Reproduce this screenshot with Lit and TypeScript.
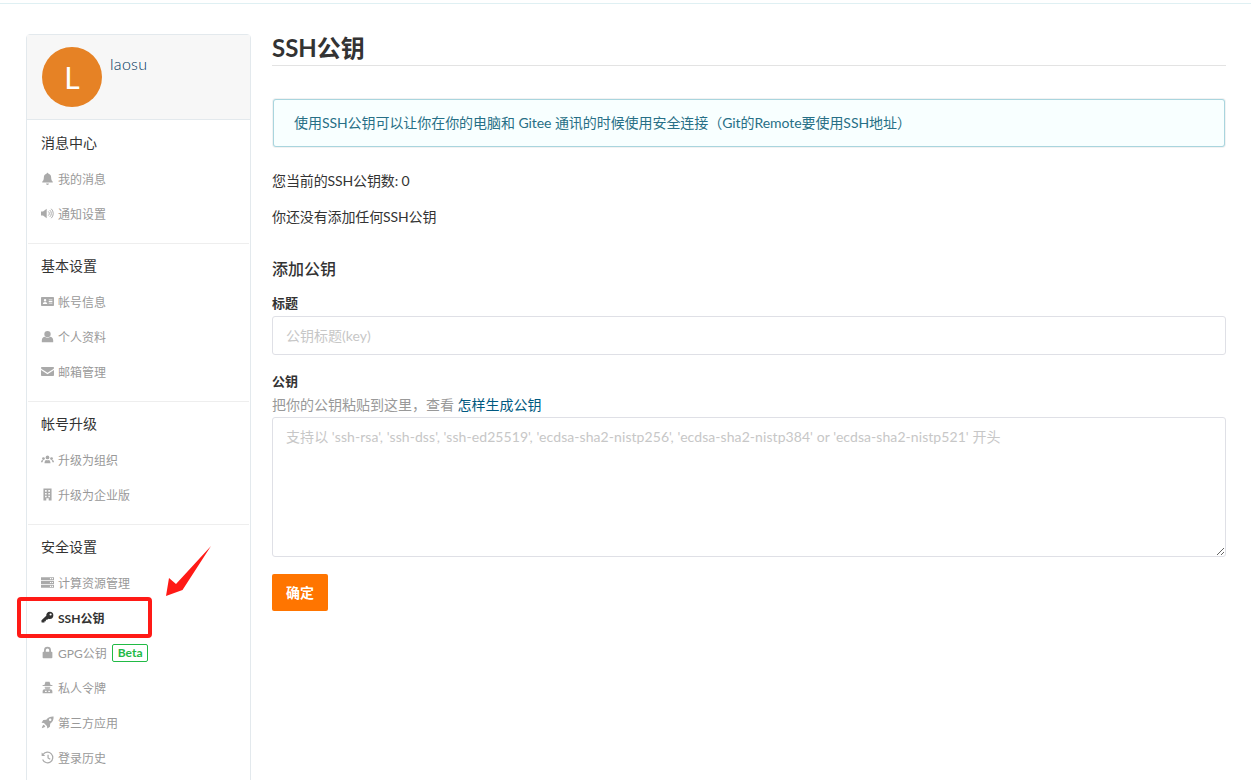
import { LitElement, html, css, svg } from 'lit';
import { customElement } from 'lit/decorators.js';

const ICONS = {
  bell: svg`<path d="M8 1a1.1 1.1 0 0 1 1.1 1.2c2.2.5 3.4 2.2 3.4 4.5 0 3 .9 4.2 2 5.3v.8H1.5V12c1.1-1.1 2-2.3 2-5.3 0-2.3 1.2-4 3.4-4.5A1.1 1.1 0 0 1 8 1z"/><path d="M6.2 14.1h3.6a1.8 1.8 0 0 1-3.6 0z"/>`,
  volume: svg`<path d="M0 5.500h2.500L7 2.200v11.600l-4.500-3.300H0z"/><path d="M9 5.500a3.200 3.200 0 0 1 0 5M10.800 3.800a5.600 5.600 0 0 1 0 8.400M12.600 2.200a8 8 0 0 1 0 11.600" fill="none" stroke="currentColor" stroke-width="1.200"/>`,
  idcard: svg`<path fill-rule="evenodd" d="M1 2.500h14a1 1 0 0 1 1 1v9a1 1 0 0 1-1 1H1a1 1 0 0 1-1-1v-9a1 1 0 0 1 1-1zM5 5a1.500 1.500 0 1 0 0 3 1.500 1.500 0 0 0 0-3zM2.300 11h5.400c0-1.600-1-2.500-2.700-2.500S2.300 9.400 2.300 11zM9.500 5.500v1H14v-1zM9.500 7.500v1H14v-1zM9.500 9.500v1H14v-1z"/>`,
  user: svg`<circle cx="8" cy="5" r="3.900"/><path d="M1 15v-2.400C1 10 3 8.600 4.600 8.300c1 .8 2.100 1.200 3.400 1.200s2.400-.4 3.400-1.200C13 8.600 15 10 15 12.600V15z"/>`,
  mail: svg`<path d="M1.300 2.500h13.400c.7 0 1.300.6 1.300 1.200 0 .5-.3.900-.7 1.200L8 9.600.7 4.900C.3 4.600 0 4.200 0 3.700c0-.6.600-1.200 1.300-1.200z"/><path d="M0 6.200l8 5.200 8-5.200v6c0 .7-.6 1.300-1.300 1.300H1.300C.6 13.500 0 12.900 0 12.200z"/>`,
  users: svg`<circle cx="8" cy="5.500" r="2.300"/><path d="M4.300 12.500c0-2.500 1.300-4 2-4 .5.300 1 .5 1.700.5s1.200-.2 1.700-.5c.7 0 2 1.500 2 4z"/><circle cx="3" cy="6.800" r="1.700"/><path d="M0 11.500c0-1.800.8-3 1.500-3 .5.300 1 .5 1.500.5-.6.800-1 1.400-1.100 2.500z"/><circle cx="13" cy="6.800" r="1.700"/><path d="M16 11.500c0-1.800-.8-3-1.500-3-.5.300-1 .5-1.500.5.600.8 1 1.400 1.100 2.500z"/>`,
  building: svg`<path fill-rule="evenodd" d="M3 .5h10v15H9.500v-3h-3v3H3zM5 2.500v2h2v-2zM9 2.500v2h2v-2zM5 6v2h2V6zM9 6v2h2V6zM5 9.500v2h2v-2zM9 9.500v2h2v-2z"/>`,
  server: svg`<path fill-rule="evenodd" d="M0 1.500h16v3.600H0zM11 2.600v1.400h1.400V2.600zM13.300 2.600v1.400h1.400V2.600zM0 6.200h16v3.600H0zM11 7.300v1.400h1.400V7.300zM13.300 7.300v1.400h1.400V7.300zM0 10.900h16v3.600H0zM11 12v1.400h1.400V12zM13.300 12v1.400h1.400V12z"/>`,
  key: svg`<path fill-rule="evenodd" d="M10.700.8a4.500 4.500 0 0 1 0 9c-.6 0-1.200-.1-1.700-.3l-1.300 1.400H6v1.700H4.300v1.700H1.200L.6 13.800v-2.300l5.900-5.700a4.500 4.500 0 0 1 4.200-5zM11.800 3a1.300 1.300 0 1 0 0 2.600 1.300 1.300 0 0 0 0-2.600z"/>`,
  lock: svg`<path fill-rule="evenodd" d="M8 .8a4.300 4.300 0 0 1 4.300 4.300V7h.7c.6 0 1 .4 1 1v6.200c0 .6-.4 1-1 1H3c-.6 0-1-.4-1-1V8c0-.6.4-1 1-1h.7V5.100A4.300 4.300 0 0 1 8 .8zM8 3a2.100 2.100 0 0 0-2.100 2.100V7h4.200V5.100A2.100 2.100 0 0 0 8 3z"/>`,
  secret: svg`<path d="M5.500 1h5l1.300 4H14v1H2V5h2.200z"/><path d="M4.500 7h7a3.500 3.500 0 0 1-7 0z" opacity=".8"/><path fill-rule="evenodd" d="M2 15v-2.500C2 11 3 10 4.500 10h7c1.500 0 2.500 1 2.500 2.500V15zM5 12v1.500h2V12zM9 12v1.500h2V12z"/>`,
  rocket: svg`<path fill-rule="evenodd" d="M15.500.5c.2 3.800-1.100 6.800-4.200 9l-.3 3.700L7.800 15.300l-.5-2.900-3.700-3.700-2.900-.5 2.100-3.400 3.700-.3C8.700 1.600 11.700.3 15.500.5zM11.300 3.200a1.500 1.500 0 1 0 0 3 1.500 1.500 0 0 0 0-3z"/><path d="M3.300 10.700l2 2c-.8 1.300-2.400 2-4.300 2.300.3-1.900 1-3.500 2.300-4.300z"/>`,
  history: svg`<path d="M2.700 4.200A6.500 6.500 0 1 1 2 10.500" fill="none" stroke="currentColor" stroke-width="1.500"/><path d="M.8 1.800l4.400 4.200H.8z"/><path d="M8.700 4.500v4l2.700 1.700" fill="none" stroke="currentColor" stroke-width="1.500"/>`,
};

type IconName = keyof typeof ICONS;

interface NavItem {
  icon: IconName;
  label: string;
  active?: boolean;
  beta?: boolean;
}

interface NavGroup {
  title: string;
  items: NavItem[];
}

const NAV: NavGroup[] = [
  {
    title: '消息中心',
    items: [
      { icon: 'bell', label: '我的消息' },
      { icon: 'volume', label: '通知设置' },
    ],
  },
  {
    title: '基本设置',
    items: [
      { icon: 'idcard', label: '帐号信息' },
      { icon: 'user', label: '个人资料' },
      { icon: 'mail', label: '邮箱管理' },
    ],
  },
  {
    title: '帐号升级',
    items: [
      { icon: 'users', label: '升级为组织' },
      { icon: 'building', label: '升级为企业版' },
    ],
  },
  {
    title: '安全设置',
    items: [
      { icon: 'server', label: '计算资源管理' },
      { icon: 'key', label: 'SSH公钥', active: true },
      { icon: 'lock', label: 'GPG公钥', beta: true },
      { icon: 'secret', label: '私人令牌' },
      { icon: 'rocket', label: '第三方应用' },
      { icon: 'history', label: '登录历史' },
    ],
  },
];

const KEY_PLACEHOLDER =
  "支持以 'ssh-rsa', 'ssh-dss', 'ssh-ed25519', 'ecdsa-sha2-nistp256', 'ecdsa-sha2-nistp384' or 'ecdsa-sha2-nistp521' 开头";

@customElement('app-root')
export class AppRoot extends LitElement {
  static styles = css`
    :host {
      display: block;
      position: relative;
      height: 780px;
      overflow: hidden;
      background: #fff;
      color: #333;
      font-family: Lato, 'Noto Sans CJK SC', sans-serif;
      font-size: 14px;
    }

    .topline {
      height: 3px;
      border-bottom: 1px solid #dff0f3;
    }

    .layout {
      display: flex;
      align-items: flex-start;
      gap: 21px;
      padding: 30px 25px 0 26px;
    }

    .sidebar {
      flex: 0 0 225px;
      box-sizing: border-box;
      border: 1px solid #e3e9ed;
      border-radius: 4px 4px 0 0;
      padding-bottom: 40px;
    }

    .profile {
      display: flex;
      gap: 8px;
      height: 72px;
      padding: 12px 15px 0;
      background: #f7f7f7;
      border-bottom: 1px solid #e3e9ed;
    }

    .avatar {
      width: 60px;
      height: 60px;
      border-radius: 50%;
      background: #e68225;
      color: #fff;
      font-size: 30px;
      line-height: 60px;
      text-align: center;
    }

    .name {
      margin-top: 6px;
      font-size: 16px;
      font-weight: 300;
      line-height: 22px;
      letter-spacing: 0.3px;
      color: #00365a;
    }

    .groups {
      padding-top: 1px;
    }

    .group {
      padding: 5px 0 12px;
      margin: 0 1px;
      border-bottom: 1px solid #eee;
    }

    .group:last-child {
      border-bottom: none;
    }

    .group-title {
      height: 35px;
      padding-left: 13px;
      line-height: 33px;
      color: #333;
    }

    .item {
      display: flex;
      align-items: center;
      height: 35px;
      padding-left: 13px;
      font-size: 12px;
      color: #999;
    }

    .item.active {
      color: #333;
      font-weight: 700;
    }

    .item svg {
      flex: none;
      width: 13px;
      height: 13px;
      margin-right: 4px;
      fill: #aaa;
      color: #aaa;
    }

    .item.active svg {
      fill: #333;
      color: #333;
    }

    .beta {
      margin-left: 5px;
      padding: 0 5px;
      border: 1px solid #21ba45;
      border-radius: 2px;
      color: #21ba45;
      font-size: 12px;
      font-weight: 700;
      line-height: 16px;
    }

    .main {
      flex: 1;
      min-width: 0;
    }

    h2 {
      margin: 0;
      height: 31px;
      border-bottom: 1px solid #e3e3e3;
      font-size: 24px;
      font-weight: 700;
      line-height: 28px;
      color: #333;
    }

    .alert {
      box-sizing: border-box;
      height: 48px;
      margin: 33px 1px 0;
      padding-left: 21px;
      border-radius: 3px;
      background: #f8ffff;
      box-shadow: 0 0 0 1px #a9d5de inset, 0 0 0 1px rgba(34, 36, 38, 0.06);
      color: #276f86;
      line-height: 47px;
      letter-spacing: -0.06px;
    }

    .stat {
      margin: 0;
      line-height: 20px;
      letter-spacing: -0.12px;
    }

    .stat.count {
      margin-top: 24px;
    }

    .stat.empty {
      margin-top: 16px;
    }

    h3 {
      margin: 30px 0 0;
      font-size: 16px;
      font-weight: 500;
      line-height: 24px;
      color: #333;
    }

    label {
      display: block;
      font-size: 13px;
      font-weight: 700;
      line-height: 18px;
      color: #333;
    }

    .label-title {
      margin-top: 13px;
    }

    .label-key {
      margin-top: 17px;
    }

    .hint {
      margin: 5px 0 2px;
      line-height: 20px;
      color: #999;
    }

    .hint a {
      color: #005980;
      text-decoration: none;
    }

    input,
    textarea {
      display: block;
      box-sizing: border-box;
      width: 100%;
      margin: 0;
      padding: 0 13px;
      border: 1px solid #dfe0e6;
      border-radius: 3px;
      background: #fff;
      color: #333;
      font: inherit;
      outline: none;
    }

    input::placeholder,
    textarea::placeholder {
      color: #c7c7c7;
      opacity: 1;
    }

    input {
      height: 39px;
      margin-top: 4px;
    }

    textarea {
      height: 140px;
      padding-top: 9px;
      line-height: 20px;
      letter-spacing: 0.07px;
      resize: vertical;
    }

    button {
      display: block;
      width: 56px;
      height: 37px;
      margin-top: 17px;
      padding: 0 0 2px;
      border: none;
      border-radius: 2px;
      background: #ff7500;
      color: #fff;
      font: inherit;
      font-weight: 700;
    }

    .mark {
      position: absolute;
      inset: 0;
      width: 100%;
      height: 100%;
      pointer-events: none;
    }
  `;

  private renderItem(item: NavItem) {
    return html`
      <div class="item ${item.active ? 'active' : ''}">
        <svg viewBox="0 0 16 16">${ICONS[item.icon]}</svg>
        <span>${item.label}</span>
        ${item.beta ? html`<span class="beta">Beta</span>` : ''}
      </div>
    `;
  }

  render() {
    return html`
      <div class="topline"></div>
      <div class="layout">
        <aside class="sidebar">
          <div class="profile">
            <div class="avatar">L</div>
            <div class="name">laosu</div>
          </div>
          <div class="groups">
            ${NAV.map(
              (group) => html`
                <div class="group">
                  <div class="group-title">${group.title}</div>
                  ${group.items.map((item) => this.renderItem(item))}
                </div>
              `
            )}
          </div>
        </aside>
        <main class="main">
          <h2>SSH公钥</h2>
          <div class="alert">使用SSH公钥可以让你在你的电脑和 Gitee 通讯的时候使用安全连接（Git的Remote要使用SSH地址）</div>
          <p class="stat count">您当前的SSH公钥数: 0</p>
          <p class="stat empty">你还没有添加任何SSH公钥</p>
          <h3>添加公钥</h3>
          <label class="label-title">标题</label>
          <input placeholder="公钥标题(key)" />
          <label class="label-key">公钥</label>
          <p class="hint">把你的公钥粘贴到这里，查看 <a href="#">怎样生成公钥</a></p>
          <textarea placeholder=${KEY_PLACEHOLDER}></textarea>
          <button>确定</button>
        </main>
      </div>
      <svg class="mark" viewBox="0 0 1251 780">
        <rect x="19" y="599" width="131" height="37" rx="2" fill="none" stroke="#ff1a16" stroke-width="4" />
        <polygon points="211,546 182.500,590 166,596 169,578 176,584" fill="#ff1a16" />
      </svg>
    `;
  }
}
